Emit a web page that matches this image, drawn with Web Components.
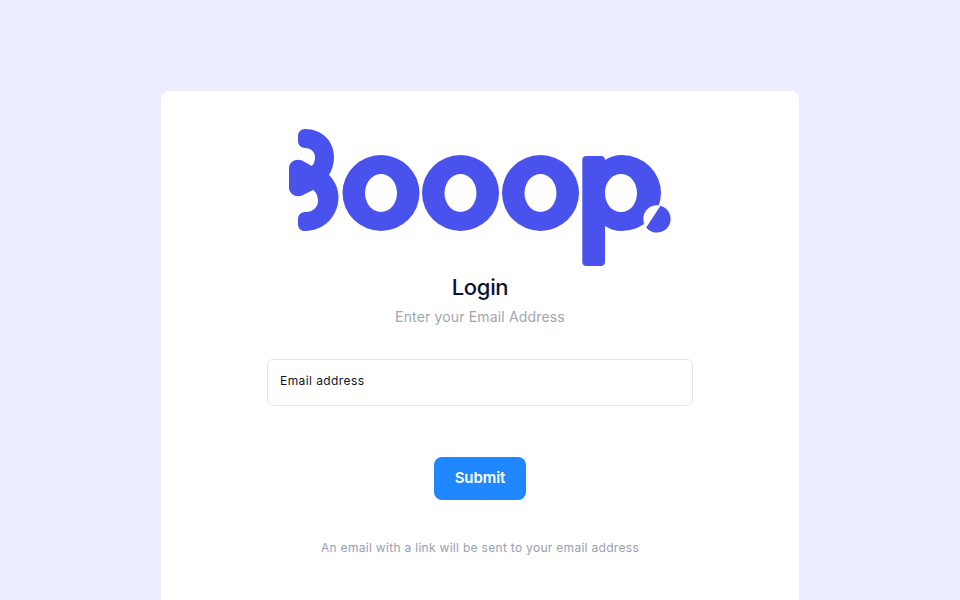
<!DOCTYPE html>
<html lang="en">
<head>
<meta charset="utf-8">
<title>Login</title>
<style>
  html, body { margin: 0; height: 100%; overflow: hidden; }
  body { background: #ecedff; font-family: Inter, "Noto Sans", sans-serif; }
</style>
</head>
<body>
<login-page>
  <login-card>
    <boop-logo slot="logo"></boop-logo>
    <span slot="title">Login</span>
    <span slot="subtitle">Enter your Email Address</span>
    <email-field slot="field" label="Email address"></email-field>
    <submit-button slot="action">Submit</submit-button>
    <span slot="note">An email with a link will be sent to your email address</span>
  </login-card>
</login-page>

<script>
class LoginPage extends HTMLElement {
  constructor() {
    super();
    this.attachShadow({ mode: 'open' });
    this.shadowRoot.innerHTML = `
      <style>
        :host {
          display: flex;
          justify-content: center;
          padding-top: 91px;
          height: 509px;
          overflow: hidden;
        }
      </style>
      <slot></slot>
    `;
  }
}

class LoginCard extends HTMLElement {
  constructor() {
    super();
    this.attachShadow({ mode: 'open' });
    this.shadowRoot.innerHTML = `
      <style>
        :host {
          display: flex;
          flex-direction: column;
          align-items: center;
          box-sizing: border-box;
          width: 638px;
          height: 620px;
          padding-top: 38px;
          background: #fff;
          border-radius: 8px;
        }
        .title {
          margin-top: 4px;
          font-size: 22px;
          line-height: 32px;
          font-weight: 550;
          letter-spacing: -0.3px;
          color: #0e1133;
        }
        .subtitle {
          margin-top: 3px;
          font-size: 14px;
          line-height: 22px;
          letter-spacing: 0.16px;
          color: #a1a5b0;
        }
        .field { margin-top: 31px; }
        .action { margin-top: 51px; }
        .note {
          margin-top: 39px;
          font-size: 12px;
          line-height: 18px;
          letter-spacing: 0.3px;
          color: #9a9eb0;
        }
      </style>
      <slot name="logo"></slot>
      <div class="title"><slot name="title"></slot></div>
      <div class="subtitle"><slot name="subtitle"></slot></div>
      <div class="field"><slot name="field"></slot></div>
      <div class="action"><slot name="action"></slot></div>
      <div class="note"><slot name="note"></slot></div>
    `;
  }
}

class BoopLogo extends HTMLElement {
  constructor() {
    super();
    this.attachShadow({ mode: 'open' });
    // viewBox uses page coordinates, easier to compare against the reference
    this.shadowRoot.innerHTML = `
      <style>
        :host { display: block; width: 384px; height: 138px; }
        svg { display: block; }
      </style>
      <svg width="384" height="138" viewBox="288 129 384 138" role="img" aria-label="Booop logo">
        <g fill="#4a52ee">
          <path d="M305 129 C322 129 334 141 334 157 C334 164 332 170 329 175 C335 181 338.500 189 338.500 197 C338.500 216 324 231 305 231 L304 231 C300.500 231 298 228 298 224 L298 219 C298 215 301 212 305 212 L306 212 C313 212 318 207 318 201 C318 196 316 192 313 190 L302 195.500 C297 198 289 194 289 188 L289 168 C289 161 297 158 302 160.500 L312 166 C314.500 163 315 160 315 157 C315 152 311 148 305 148 C301 148 298 145 298 141 L298 136 C298 132 301 129 305 129 Z"/>
          <path fill-rule="evenodd" d="M381 155 A38.500 38 0 1 0 381 231 A38.500 38 0 1 0 381 155 Z M381 174 A16 19 0 1 1 381 212 A16 19 0 1 1 381 174 Z"/>
          <path fill-rule="evenodd" d="M460.500 155 A38.500 38 0 1 0 460.500 231 A38.500 38 0 1 0 460.500 155 Z M460.500 174 A16 19 0 1 1 460.500 212 A16 19 0 1 1 460.500 174 Z"/>
          <path fill-rule="evenodd" d="M540.500 155 A38.500 38 0 1 0 540.500 231 A38.500 38 0 1 0 540.500 155 Z M540.500 174 A16 19 0 1 1 540.500 212 A16 19 0 1 1 540.500 174 Z"/>
          <path fill-rule="evenodd" d="M622 155 A39 38 0 1 1 622 231 C615 231 609.500 229 605 226 L605 262 C605 264.500 603 266 601 266 L586.500 266 C584 266 582.300 264.500 582.300 262 L582.300 160 C582.300 157.500 584 156 586.500 156 L601 156 C603.500 156 605 157.500 605 160 C609.500 157 615 155 622 155 Z M621 174 C612 174 605 182 605 193 C605 204 612 212 621 212 C630 212 637 204 637 193 C637 182 630 174 621 174 Z"/>
        </g>
        <circle cx="657" cy="219" r="13.700" fill="#fff"/>
        <path d="M660.500 205.700 A13.700 13.700 0 1 1 646.200 227.500 Z" fill="#4a52ee"/>
      </svg>
    `;
  }
}

class EmailField extends HTMLElement {
  constructor() {
    super();
    this.attachShadow({ mode: 'open' });
    this.shadowRoot.innerHTML = `
      <style>
        :host {
          display: block;
          box-sizing: border-box;
          width: 426px;
          height: 47px;
          padding: 12px 12px 0;
          border: 1px solid #e2e4ea;
          border-radius: 6px;
          background: #fff;
          font-size: 12px;
          line-height: 18px;
          letter-spacing: 0.42px;
          color: #10132c;
        }
      </style>
      <span class="label"></span>
    `;
  }

  connectedCallback() {
    this.shadowRoot.querySelector('.label').textContent = this.getAttribute('label') || '';
  }
}

class SubmitButton extends HTMLElement {
  constructor() {
    super();
    this.attachShadow({ mode: 'open' });
    this.shadowRoot.innerHTML = `
      <style>
        :host { display: block; }
        button {
          display: block;
          width: 92px;
          height: 43px;
          padding: 0 0 2px;
          border: 0;
          border-radius: 8px;
          background: #1f88ff;
          color: #fff;
          letter-spacing: -0.05px;
          font: 600 15px/41px Inter, "Noto Sans", sans-serif;
        }
      </style>
      <button type="button"><slot></slot></button>
    `;
  }
}

customElements.define('login-page', LoginPage);
customElements.define('login-card', LoginCard);
customElements.define('boop-logo', BoopLogo);
customElements.define('email-field', EmailField);
customElements.define('submit-button', SubmitButton);
</script>
</body>
</html>
